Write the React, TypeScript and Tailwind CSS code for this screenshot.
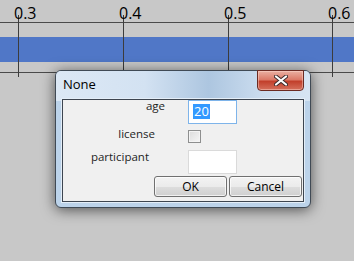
import React from "react";

const ticks = [
  { x: 18, label: "0.3" },
  { x: 123, label: "0.4" },
  { x: 228, label: "0.5" },
  { x: 332, label: "0.6" },
];

function Axis() {
  return (
    <svg className="absolute inset-0" width={354} height={261}>
      <rect x={0} y={37} width={354} height={25} fill="#5077c7" />
      <line x1={0} y1={22.5} x2={354} y2={22.5} stroke="#4a4a4a" strokeWidth={1} />
      <line x1={0} y1={72.5} x2={354} y2={72.5} stroke="#4a4a4a" strokeWidth={1} />
      {ticks.map((t) => (
        <g key={t.x}>
          <line x1={t.x + 0.5} y1={15} x2={t.x + 0.5} y2={77} stroke="#3c3c3c" strokeWidth={1} />
          <text
            x={t.x - 4}
            y={19}
            fontSize={16}
            fill="#000000"
            fontFamily="'Open Sans', 'Noto Sans', sans-serif"
          >
            {t.label}
          </text>
        </g>
      ))}
    </svg>
  );
}

function CloseButton() {
  return (
    <div className="absolute right-[6px] top-[-1px] flex h-[21px] w-[47px] items-center justify-center rounded-b-[4px] border border-[#6b2a22] bg-[linear-gradient(to_bottom,#eab0a2_0%,#dc7a68_45%,#c2402c_55%,#d5705c_100%)] shadow-[inset_0_0_0_1px_rgba(255,220,210,0.45)]">
      <svg width="14" height="11" viewBox="0 0 14 11">
        <path
          d="M2 1.5 L12 9.5 M12 1.5 L2 9.5"
          stroke="#3b2a2a"
          strokeWidth="4"
          strokeLinecap="round"
        />
        <path
          d="M2 1.5 L12 9.5 M12 1.5 L2 9.5"
          stroke="#ffffff"
          strokeWidth="2.2"
          strokeLinecap="round"
        />
      </svg>
    </div>
  );
}

function Button({ children }: { children: React.ReactNode }) {
  return (
    <div className="flex h-[21px] w-[73px] items-center justify-center rounded-[3px] border border-[#707070] bg-[linear-gradient(to_bottom,#f3f3f3_0%,#ebebeb_50%,#dddddd_51%,#cfcfcf_100%)] text-[12px] text-black shadow-[inset_0_0_0_1px_rgba(255,255,255,0.7)]">
      {children}
    </div>
  );
}

function Dialog() {
  return (
    <div
      className="absolute left-[55px] top-[70px] flex h-[138px] w-[256px] flex-col rounded-[6px] border border-[#404a55] bg-[#bcd3ea] px-[6px] pb-[5px] shadow-[0_2px_14px_rgba(0,0,0,0.6)]"
      style={{ fontFamily: "'Open Sans', 'Noto Sans', sans-serif" }}
    >
      <div className="absolute inset-x-0 top-0 h-[30px] rounded-t-[5px] bg-[linear-gradient(to_right,#dce8f5_0%,#d3e2f2_35%,#adc6e0_60%,#c9dbee_80%,#d7e5f3_100%)]" />
      <CloseButton />
      <div className="relative flex h-[28px] items-center pl-[1px] text-[13px] text-black">None</div>
      <div className="relative flex flex-1 flex-col border border-[#3d4550] bg-[#f0f0f0] shadow-[0_0_0_1px_#e4eef8] text-[11.5px] leading-[15px] text-[#1e1e1e]">
        <div className="flex h-[24px] items-start">
          <div className="w-[125px] pr-[23px] text-right -mt-[2px]">age</div>
          <div className="relative h-[24px] w-[49px] border border-[#7eb4ea] bg-white">
            <span className="absolute left-[4px] top-[3px] bg-[#3399ff] px-[1px] text-[13px] leading-[15px] text-white">20</span>
          </div>
        </div>
        <div className="mt-[6px] flex h-[13px] items-start">
          <div className="w-[125px] pr-[33px] text-right -mt-[4px]">license</div>
          <div className="h-[13px] w-[13px] border border-[#8e8f8f] bg-[linear-gradient(135deg,#dcdcdc,#f6f6f6)] shadow-[inset_0_0_0_1px_#f4f4f4]" />
        </div>
        <div className="mt-[7px] flex h-[24px] items-start">
          <div className="w-[125px] pr-[39px] text-right -mt-[1px]">participant</div>
          <div className="h-[24px] w-[49px] border border-[#dadada] bg-white" />
        </div>
        <div className="mt-[2px] flex justify-end gap-[2px] pr-[1px]">
          <Button>OK</Button>
          <Button>Cancel</Button>
        </div>
      </div>
    </div>
  );
}

export default function App() {
  return (
    <div className="relative h-[261px] w-[354px] overflow-hidden bg-[#c8c8c8]">
      <Axis />
      <Dialog />
    </div>
  );
}
